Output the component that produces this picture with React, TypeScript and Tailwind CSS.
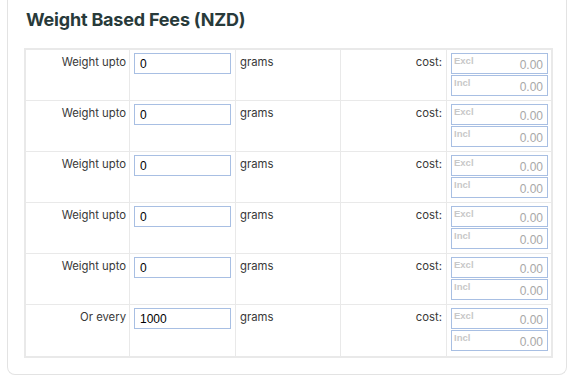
const rows = [
    { label: "Weight upto", value: "0" },
    { label: "Weight upto", value: "0" },
    { label: "Weight upto", value: "0" },
    { label: "Weight upto", value: "0" },
    { label: "Weight upto", value: "0" },
    { label: "Or every", value: "1000" },
];

const CostInput = ({ tag }: { tag: string }) => {
    return (
        <div className="relative h-[21px] border border-[#a8bfe3] bg-white">
            <span className="absolute left-[2px] top-[1px] text-[9.5px] leading-[11px] font-semibold text-[#c8c8c8] [font-family:'Liberation_Sans',Arial,sans-serif]">{tag}</span>
            <span className="absolute right-[4px] top-[4px] text-[12px] leading-[14px] text-[#a8a8a8] [font-family:'Liberation_Sans',Arial,sans-serif]">0.00</span>
        </div>
    );
};

const FeeRow = ({ label, value, last }: { label: string, value: string, last: boolean }) => {
    const cell = `h-[51px] border-[#e9e9e9] ${last ? '' : 'border-b'}`;
    return (
        <>
            <div className={`${cell} border-r pt-[4px] pr-[3px] text-right text-[11.3px] leading-[16px] text-[#383838]`}>{label}</div>
            <div className={`${cell} border-r pt-[3px] px-[4px]`}>
                <div className="h-[21px] border border-[#a8bfe3] pl-[5px] text-[12px] leading-[20px] text-black [font-family:'Liberation_Sans',Arial,sans-serif]">
                    {value}
                </div>
            </div>
            <div className={`${cell} border-r pt-[4px] pl-[4px] text-[11.3px] leading-[16px] text-[#383838]`}>grams</div>
            <div className={`${cell} border-r pt-[4px] pr-[4px] text-right text-[11.3px] leading-[16px] text-[#383838]`}>cost:</div>
            <div className={`${cell} pt-[3px] pl-[4px] pr-[3px] flex flex-col gap-px`}>
                <CostInput tag="Excl" />
                <CostInput tag="Incl" />
            </div>
        </>
    );
};

export default function App() {
    return (
        <div className="w-[567px] h-[383px] bg-white overflow-hidden [font-family:Inter,'Noto_Sans',sans-serif]">
            <div className="ml-[7px] w-[560px] border border-t-0 border-[#e3e3e3] rounded-b-lg pb-[16px]">
                <h1 className="pt-[6px] pl-[18px] text-[18px] leading-[28px] font-bold tracking-[-0.2px] text-[#283a3a] mb-[14px]">
                    Weight Based Fees (NZD)
                </h1>
                <div className="ml-[16px] w-[529px] border-2 border-[#e9e9e9] grid grid-cols-[104px_106px_105px_106px_104px]">
                    {rows.map((row, i) => (
                        <FeeRow key={i} label={row.label} value={row.value} last={i === rows.length - 1} />
                    ))}
                </div>
            </div>
        </div>
    );
}
